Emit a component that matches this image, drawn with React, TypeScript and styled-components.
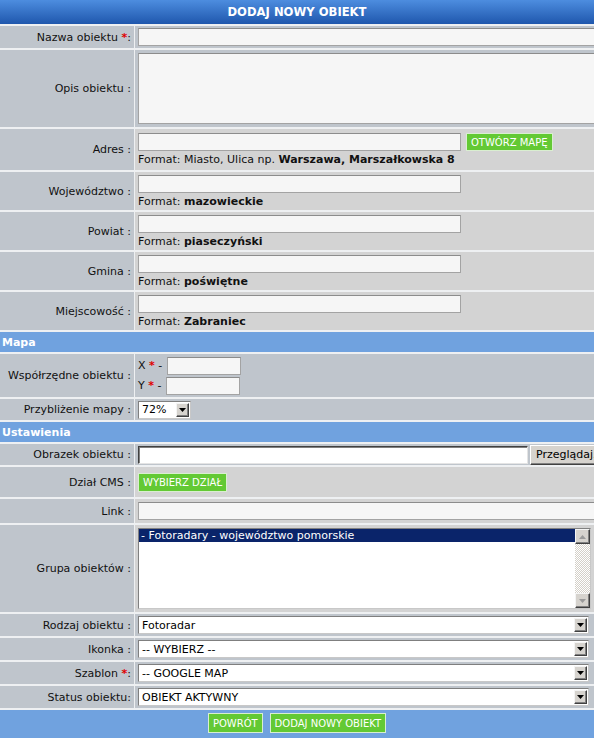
import { createGlobalStyle, styled } from 'styled-components'

const FONT = '"DejaVu Sans", Verdana, sans-serif'

const GlobalStyle = createGlobalStyle`
    html, body {
        margin: 0;
        padding: 0;
        overflow: hidden;
        background: #ffffff;
    }
    body {
        width: 594px;
        font-family: ${FONT};
        font-size: 11px;
        color: #111111;
    }
`

type Tone = 'blue' | 'grey'

const formatRows = [
    { label: 'Województwo :', value: 'mazowieckie' },
    { label: 'Powiat :', value: 'piaseczyński' },
    { label: 'Gmina :', value: 'poświętne' },
    { label: 'Miejscowość :', value: 'Zabraniec' },
]

const selectRows = [
    { label: 'Rodzaj obiektu :', value: 'Fotoradar', required: false },
    { label: 'Ikonka :', value: '-- WYBIERZ --', required: false },
    { label: 'Szablon ', value: '-- GOOGLE MAP', required: true },
    { label: 'Status obiektu:', value: 'OBIEKT AKTYWNY', required: false },
]

function Arrow({ up, color }: { up?: boolean; color: string }) {
    return (
        <svg width="7" height="4" viewBox="0 0 7 4">
            <path d={up ? 'M0 4 L3.5 0 L7 4 Z' : 'M0 0 L7 0 L3.5 4 Z'} fill={color} />
        </svg>
    )
}

function Select({ value, width }: { value: string; width?: number }) {
    return (
        <SelectWrap $w={width}>
            <NativeSelect defaultValue={value}>
                <option>{value}</option>
            </NativeSelect>
            <DropButton>
                <Arrow color="#000000" />
            </DropButton>
        </SelectWrap>
    )
}

export default function App() {
    return (
        <>
            <GlobalStyle />
            <Form onSubmit={(e) => e.preventDefault()}>
                <TitleBar>DODAJ NOWY OBIEKT</TitleBar>

                <Row $h={22}>
                    <Label>Nazwa obiektu <Req>*</Req>:</Label>
                    <Value $tone="blue">
                        <TextInput />
                    </Value>
                </Row>

                <Row $h={77}>
                    <Label>Opis obiektu :</Label>
                    <Value $tone="blue">
                        <TextArea />
                    </Value>
                </Row>

                <Row $h={41}>
                    <Label>Adres :</Label>
                    <Value $tone="grey" $top={4}>
                        <InputLine>
                            <TextInput $w={323} />
                            <GreenButton type="button" $h={18}>Otwórz mapę</GreenButton>
                        </InputLine>
                        <Format>Format: Miasto, Ulica np. <b>Warszawa, Marszałkowska 8</b></Format>
                    </Value>
                </Row>

                {formatRows.map((r) => (
                    <Row $h={38} key={r.label}>
                        <Label>{r.label}</Label>
                        <Value $tone="grey" $top={3}>
                            <TextInput $w={323} />
                            <Format>Format: <b>{r.value}</b></Format>
                        </Value>
                    </Row>
                ))}

                <SectionBar>Mapa</SectionBar>

                <Row $h={43}>
                    <Label>Współrzędne obiektu :</Label>
                    <Value $tone="blue">
                        <CoordStack>
                            <InputLine $gap={5}>
                                <span>X <Req>*</Req> -</span>
                                <TextInput $w={74} />
                            </InputLine>
                            <InputLine $gap={5}>
                                <span>Y <Req>*</Req> -</span>
                                <TextInput $w={74} />
                            </InputLine>
                        </CoordStack>
                    </Value>
                </Row>

                <Row $h={21}>
                    <Label>Przybliżenie mapy :</Label>
                    <Value $tone="blue">
                        <Select value="72%" width={53} />
                    </Value>
                </Row>

                <SectionBar>Ustawienia</SectionBar>

                <Row $h={21}>
                    <Label>Obrazek obiektu :</Label>
                    <Value $tone="blue">
                        <InputLine $gap={2}>
                            <FileText />
                            <BrowseButton type="button">Przeglądaj...</BrowseButton>
                        </InputLine>
                    </Value>
                </Row>

                <Row $h={30}>
                    <Label>Dział CMS :</Label>
                    <Value $tone="grey">
                        <GreenButton type="button" $h={19}>Wybierz dział</GreenButton>
                    </Value>
                </Row>

                <Row $h={24}>
                    <Label>Link :</Label>
                    <Value $tone="grey">
                        <TextInput />
                    </Value>
                </Row>

                <Row $h={87}>
                    <Label>Grupa obiektów :</Label>
                    <Value $tone="grey">
                        <ListBox>
                            <Options>
                                <OptionItem $selected>- Fotoradary - województwo pomorskie</OptionItem>
                            </Options>
                            <ScrollTrack>
                                <ScrollButton><Arrow up color="#9A9A9A" /></ScrollButton>
                                <ScrollButton><Arrow color="#9A9A9A" /></ScrollButton>
                            </ScrollTrack>
                        </ListBox>
                    </Value>
                </Row>

                {selectRows.map((r) => (
                    <Row $h={22} key={r.label}>
                        <Label>{r.label}{r.required && <><Req>*</Req>:</>}</Label>
                        <Value $tone="blue">
                            <Select value={r.value} />
                        </Value>
                    </Row>
                ))}

                <Footer>
                    <GreenButton type="button" $h={20}>Powrót</GreenButton>
                    <GreenButton type="submit" $h={20}>Dodaj nowy obiekt</GreenButton>
                </Footer>
            </Form>
        </>
    )
}

const Form = styled.form`
    width: 594px;
    display: grid;
    row-gap: 2px;
    background: #eef0f2;
`

const TitleBar = styled.div`
    height: 24px;
    display: flex;
    align-items: center;
    justify-content: center;
    background: linear-gradient(#4d8ddf, #1f57ad);
    color: #ffffff;
    font-weight: bold;
    font-size: 11.6px;
`

const SectionBar = styled.div`
    height: 20px;
    display: flex;
    align-items: center;
    padding-left: 2px;
    background: #70a2df;
    color: #ffffff;
    font-weight: bold;
    font-size: 11px;
`

const Row = styled.div<{ $h: number }>`
    display: grid;
    grid-template-columns: 134px 1fr;
    column-gap: 1px;
    height: ${p => p.$h}px;
`

const Label = styled.label`
    background: #bfc5cc;
    display: flex;
    align-items: center;
    justify-content: flex-end;
    padding-right: 3px;
    white-space: pre;
`

const Value = styled.div<{ $tone: Tone; $top?: number }>`
    background: ${p => (p.$tone === 'blue' ? '#bfc5cc' : '#d3d3d3')};
    display: flex;
    flex-direction: column;
    justify-content: ${p => (p.$top !== undefined ? 'flex-start' : 'center')};
    align-items: flex-start;
    padding: ${p => p.$top ?? 0}px 3px 0 3px;
    min-width: 0;
`

const Req = styled.span`
    color: #e00000;
    font-weight: bold;
`

const TextInput = styled.input<{ $w?: number }>`
    box-sizing: border-box;
    flex: none;
    height: 18px;
    width: ${p => (p.$w ? `${p.$w}px` : 'calc(100% + 6px)')};
    margin: 0;
    padding: 0 2px;
    background: #f6f6f6;
    border: 1px solid #a3a3a3;
    border-top-color: #8c8c8c;
    font: inherit;
    outline: none;
`

const TextArea = styled.textarea`
    box-sizing: border-box;
    width: calc(100% + 6px);
    height: 71px;
    margin: 0;
    padding: 2px;
    background: #f6f6f6;
    border: 1px solid #a3a3a3;
    border-top-color: #8c8c8c;
    font: inherit;
    resize: none;
    outline: none;
`

const InputLine = styled.div<{ $gap?: number }>`
    display: flex;
    align-items: center;
    column-gap: ${p => p.$gap ?? 5}px;
    white-space: nowrap;
`

const CoordStack = styled.div`
    display: flex;
    flex-direction: column;
    row-gap: 2px;
`

const Format = styled.div`
    margin-top: 2px;
    line-height: 14px;
    white-space: nowrap;

    b {
        font-weight: bold;
    }
`

const GreenButton = styled.button<{ $h: number }>`
    flex: none;
    height: ${p => p.$h}px;
    margin: 0;
    padding: 0 4px;
    background: #63c934;
    border: 1px solid #d9eed0;
    color: #ffffff;
    font-family: ${FONT};
    font-size: 10px;
    text-transform: uppercase;
    white-space: nowrap;
    cursor: pointer;
`

const FileText = styled.input`
    box-sizing: border-box;
    flex: none;
    width: 390px;
    height: 18px;
    margin: 0;
    padding: 0 2px;
    background: #ffffff;
    border: 1px solid;
    border-color: #404040 #e4e4e4 #e4e4e4 #404040;
    box-shadow: inset 1px 1px 0 #808080;
    font: inherit;
    outline: none;
`

const BrowseButton = styled.button`
    flex: none;
    height: 20px;
    margin: 0;
    padding: 0 5px;
    background: #d6d3ce;
    border: 1px solid;
    border-color: #ffffff #404040 #404040 #ffffff;
    box-shadow: inset -1px -1px 0 #808080;
    font-family: ${FONT};
    font-size: 11px;
    color: #000000;
    white-space: nowrap;
`

const SelectWrap = styled.div<{ $w?: number }>`
    box-sizing: border-box;
    display: flex;
    align-items: center;
    width: ${p => (p.$w ? `${p.$w}px` : 'calc(100% - 2px)')};
    height: 18px;
    padding: 1px;
    background: #ffffff;
    border: 1px solid;
    border-color: #7f7f7f #c8c8c8 #c8c8c8 #7f7f7f;
`

const NativeSelect = styled.select`
    flex: 1;
    min-width: 0;
    height: 100%;
    margin: 0;
    padding: 0 0 0 2px;
    appearance: none;
    background: transparent;
    border: 0;
    font: inherit;
    color: #000000;
    outline: none;
`

const DropButton = styled.span`
    box-sizing: border-box;
    flex: none;
    width: 13px;
    height: 14px;
    display: flex;
    align-items: center;
    justify-content: center;
    background: #d6d3ce;
    border: 1px solid;
    border-color: #f4f4f4 #404040 #404040 #f4f4f4;
    box-shadow: inset -1px -1px 0 #808080;
`

const ListBox = styled.div`
    box-sizing: border-box;
    display: flex;
    width: 100%;
    height: 81px;
    background: #ffffff;
    border: 1px solid;
    border-color: #808080 #c8c8c8 #c8c8c8 #808080;
`

const Options = styled.div`
    flex: 1;
    min-width: 0;
`

const OptionItem = styled.div<{ $selected?: boolean }>`
    height: 13px;
    line-height: 13px;
    padding-left: 2px;
    background: ${p => (p.$selected ? '#0a246a' : 'transparent')};
    color: ${p => (p.$selected ? '#ffffff' : '#000000')};
    white-space: nowrap;
`

const ScrollTrack = styled.div`
    flex: none;
    width: 15px;
    display: flex;
    flex-direction: column;
    justify-content: space-between;
    background: repeating-conic-gradient(#d4d0c8 0 25%, #ffffff 0 50%) 0 0 / 2px 2px;
`

const ScrollButton = styled.div`
    box-sizing: border-box;
    width: 15px;
    height: 15px;
    display: flex;
    align-items: center;
    justify-content: center;
    background: #d6d3ce;
    border: 1px solid;
    border-color: #f4f4f4 #404040 #404040 #f4f4f4;
    box-shadow: inset -1px -1px 0 #808080;
`

const Footer = styled.div`
    box-sizing: border-box;
    height: 28px;
    display: flex;
    justify-content: center;
    align-items: flex-start;
    column-gap: 7px;
    padding-top: 3px;
    background: #70a2df;
`
